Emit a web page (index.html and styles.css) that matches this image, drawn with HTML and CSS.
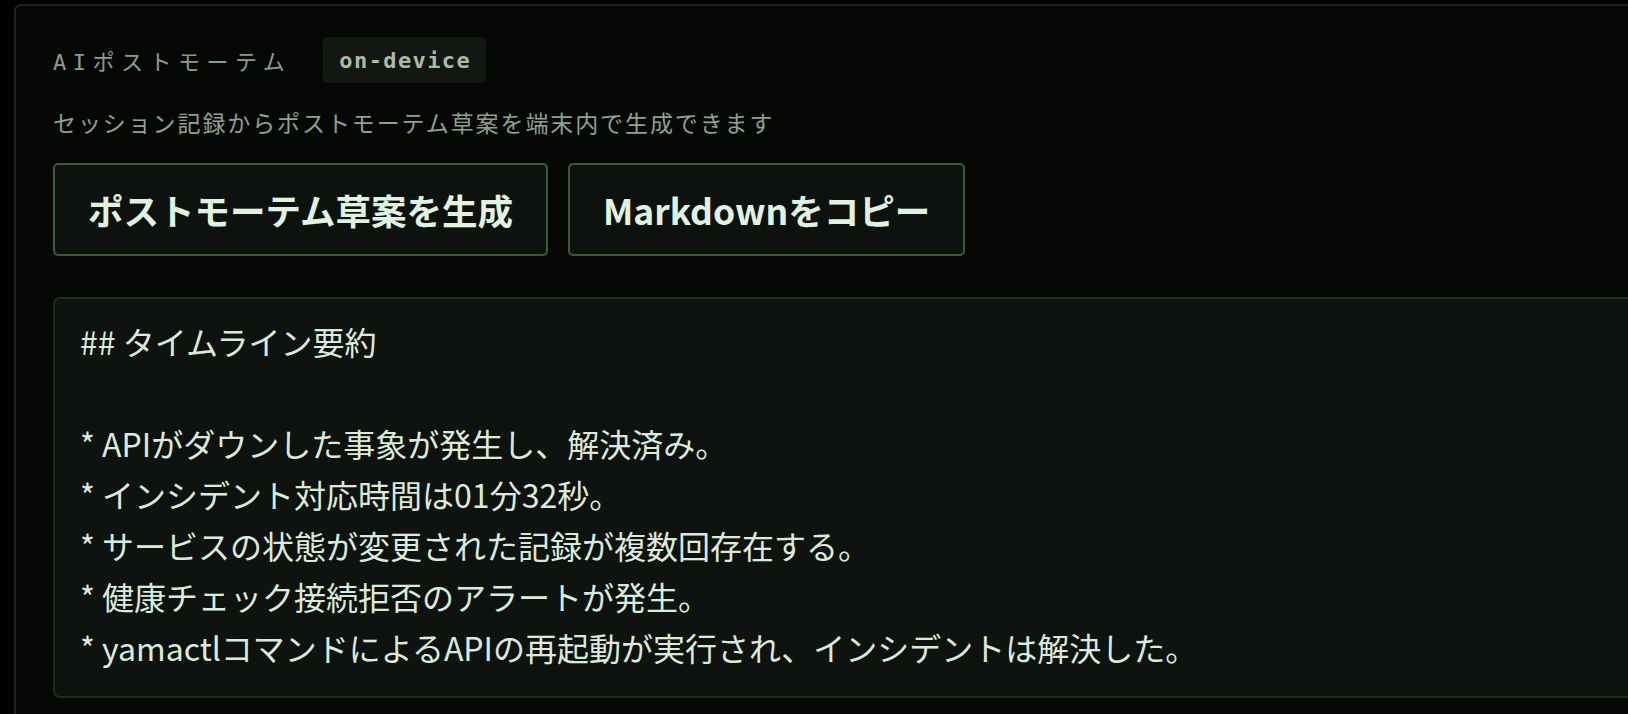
FILE: index.html
```html
<!DOCTYPE html>
<html lang="ja">
<head>
    <meta charset="UTF-8">
    <meta name="viewport" content="width=device-width, initial-scale=1.0">
    <title>AIポストモーテム</title>
    <link rel="stylesheet" href="styles.css">
</head>
<body>
    <section class="panel">
        <div class="panel-head">
            <h2 class="panel-title">AIポストモーテム</h2>
            <span class="badge">on-device</span>
        </div>
        <p class="panel-desc">セッション記録からポストモーテム草案を端末内で生成できます</p>
        <div class="actions">
            <button type="button" class="btn">ポストモーテム草案を生成</button>
            <button type="button" class="btn">Markdownをコピー</button>
        </div>
        <div class="draft">## タイムライン要約

* APIがダウンした事象が発生し、解決済み。
* インシデント対応時間は01分32秒。
* サービスの状態が変更された記録が複数回存在する。
* 健康チェック接続拒否のアラートが発生。
* yamactlコマンドによるAPIの再起動が実行され、インシデントは解決した。</div>
    </section>
</body>
</html>
```

FILE: styles.css
```css
body {
    margin: 0;
    background: #000;
    overflow: hidden;
    font-family: "Noto Sans CJK JP", "Noto Sans", sans-serif;
}

/* パネル本体（右側は画面外まで続く） */
.panel {
    margin: 4px -120px 0 14px;
    padding: 31px 37px 40px;
    background: #050705;
    border: 2px solid #1b261b;
    border-radius: 7px;
}

.panel-head {
    display: flex;
    align-items: center;
    gap: 32px;
}

.panel-title {
    margin: 0;
    font-family: "DejaVu Sans Mono", "Noto Sans CJK JP", monospace;
    font-size: 22px;
    font-weight: normal;
    letter-spacing: 6.5px;
    color: #8a9c8a;
}

.badge {
    display: flex;
    align-items: center;
    height: 46px;
    padding: 0 15px 0 16px;
    background: #121712;
    border-radius: 4px;
    font-family: "DejaVu Sans Mono", monospace;
    font-size: 22px;
    font-weight: bold;
    letter-spacing: 1.4px;
    color: #a8bca8;
}

.panel-desc {
    margin: 22px 0 0;
    font-size: 23px;
    line-height: 34px;
    letter-spacing: 1.9px;
    color: #8fa18f;
}

.actions {
    display: flex;
    gap: 20px;
    margin-top: 24px;
}

.btn {
    height: 93px;
    padding: 0 33px;
    background: #0e120e;
    border: 2px solid #3a5a3a;
    border-radius: 5px;
    font-family: "Noto Sans CJK JP", "Noto Sans", sans-serif;
    font-size: 35.5px;
    font-weight: bold;
    color: #e0f2e0;
    cursor: pointer;
}

.btn:hover {
    border-color: #4b754b;
}

/* 生成結果（Markdown） */
.draft {
    margin-top: 41px;
    padding: 17px 25px 23px;
    background: #0f130f;
    border: 2px solid #1e2b1e;
    border-radius: 7px;
    white-space: pre-wrap;
    font-size: 32px;
    line-height: 51px;
    color: #dbebdb;
}
```
